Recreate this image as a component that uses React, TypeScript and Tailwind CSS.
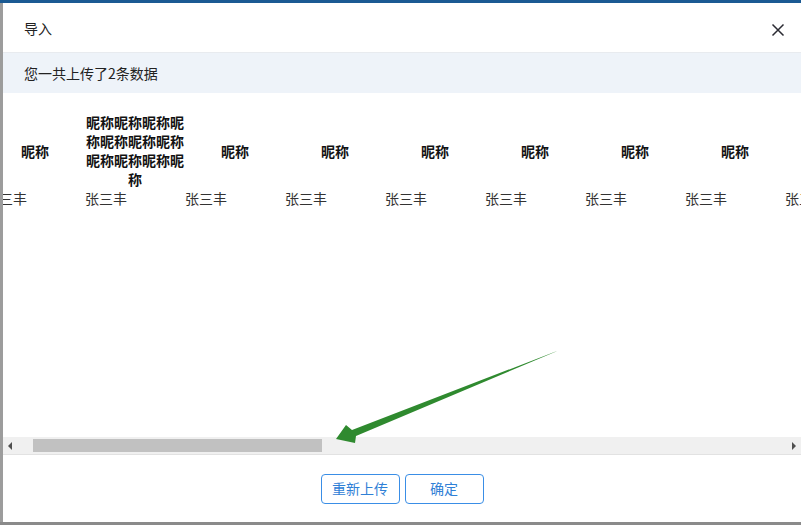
import React from "react";

const cols = Array.from({ length: 21 }, (_, i) => i);
const longName = "昵称".repeat(11);

export default function App() {
  return (
    <div
      className="relative w-[801px] h-[525px] overflow-hidden bg-[#9c9c9c] text-[#222]"
      style={{ fontFamily: '"Noto Sans CJK SC", "Noto Sans", sans-serif' }}
    >
      <div className="h-[3px] bg-[#1b5a93]" />
      <div className="flex h-[519px]">
        <div className="w-[3px] bg-[#9c9c9c]" />
        <div className="flex-1 flex flex-col bg-white overflow-hidden">
          {/* header */}
          <div className="h-[50px] flex items-center justify-between pl-[21px] pr-[16px] border-b border-[#e8ebef]">
            <span className="text-[14px] leading-[19px] pt-[2px]">导入</span>
            <svg width="14" height="14" viewBox="0 0 14 14" className="mt-[4px]">
              <path d="M1.5 1.5 L12.5 12.5 M12.5 1.5 L1.5 12.5" stroke="#2b2b33" strokeWidth="1.5" />
            </svg>
          </div>
          {/* banner */}
          <div className="h-[40px] flex items-center pl-[21px] bg-[#eef3f9] text-[14px]">
            您一共上传了2条数据
          </div>
          {/* body */}
          <div className="flex-1 flex flex-col">
            <div className="flex-1 overflow-hidden pt-[20px]">
              <table className="-ml-[18px] border-collapse table-fixed text-[14px] leading-[19px]">
                <thead>
                  <tr>
                    {cols.map((i) => (
                      <th key={i} className="w-[100px] min-w-[100px] max-w-[100px] p-0 text-center align-middle font-bold text-[#111]">
                        {i === 1 ? longName : "昵称"}
                      </th>
                    ))}
                  </tr>
                </thead>
                <tbody>
                  <tr>
                    {cols.map((i) => (
                      <td key={i} className="w-[100px] p-0 text-left text-[#333] whitespace-nowrap">
                        张三丰
                      </td>
                    ))}
                  </tr>
                </tbody>
              </table>
            </div>
            {/* fake scrollbar */}
            <div className="h-[18px] flex items-center bg-[#f0f0f0] border-b border-[#e2e2e2]">
              <div className="w-[15px] flex items-center justify-center">
                <svg width="5" height="8" viewBox="0 0 5 8">
                  <path d="M4 0 L0 4 L4 8 Z" fill="#505050" />
                </svg>
              </div>
              <div className="flex-1 h-[13px] pl-[15px]">
                <div className="w-[289px] h-full bg-[#c1c1c1]" />
              </div>
              <div className="w-[15px] flex items-center justify-center">
                <svg width="5" height="8" viewBox="0 0 5 8">
                  <path d="M1 0 L5 4 L1 8 Z" fill="#505050" />
                </svg>
              </div>
            </div>
          </div>
          {/* footer */}
          <div className="h-[67px] flex items-center justify-center gap-[5px]">
            <button className="w-[79px] h-[30px] rounded-[4px] border border-[#3a8ee6] text-[#2f80d6] text-[14px] bg-white">
              重新上传
            </button>
            <button className="w-[79px] h-[30px] rounded-[4px] border border-[#3a8ee6] text-[#2f80d6] text-[14px] bg-white">
              确定
            </button>
          </div>
        </div>
      </div>
      <div className="h-[3px] bg-[#8a8a8a]" />

      {/* annotation arrow */}
      <svg className="absolute left-0 top-0 pointer-events-none" width="801" height="525" viewBox="0 0 801 525">
        <polygon
          points="557,351 352,430 346,425 336,439 355,443 356,436 555,352"
          fill="#2f8a2f"
        />
      </svg>
    </div>
  );
}
